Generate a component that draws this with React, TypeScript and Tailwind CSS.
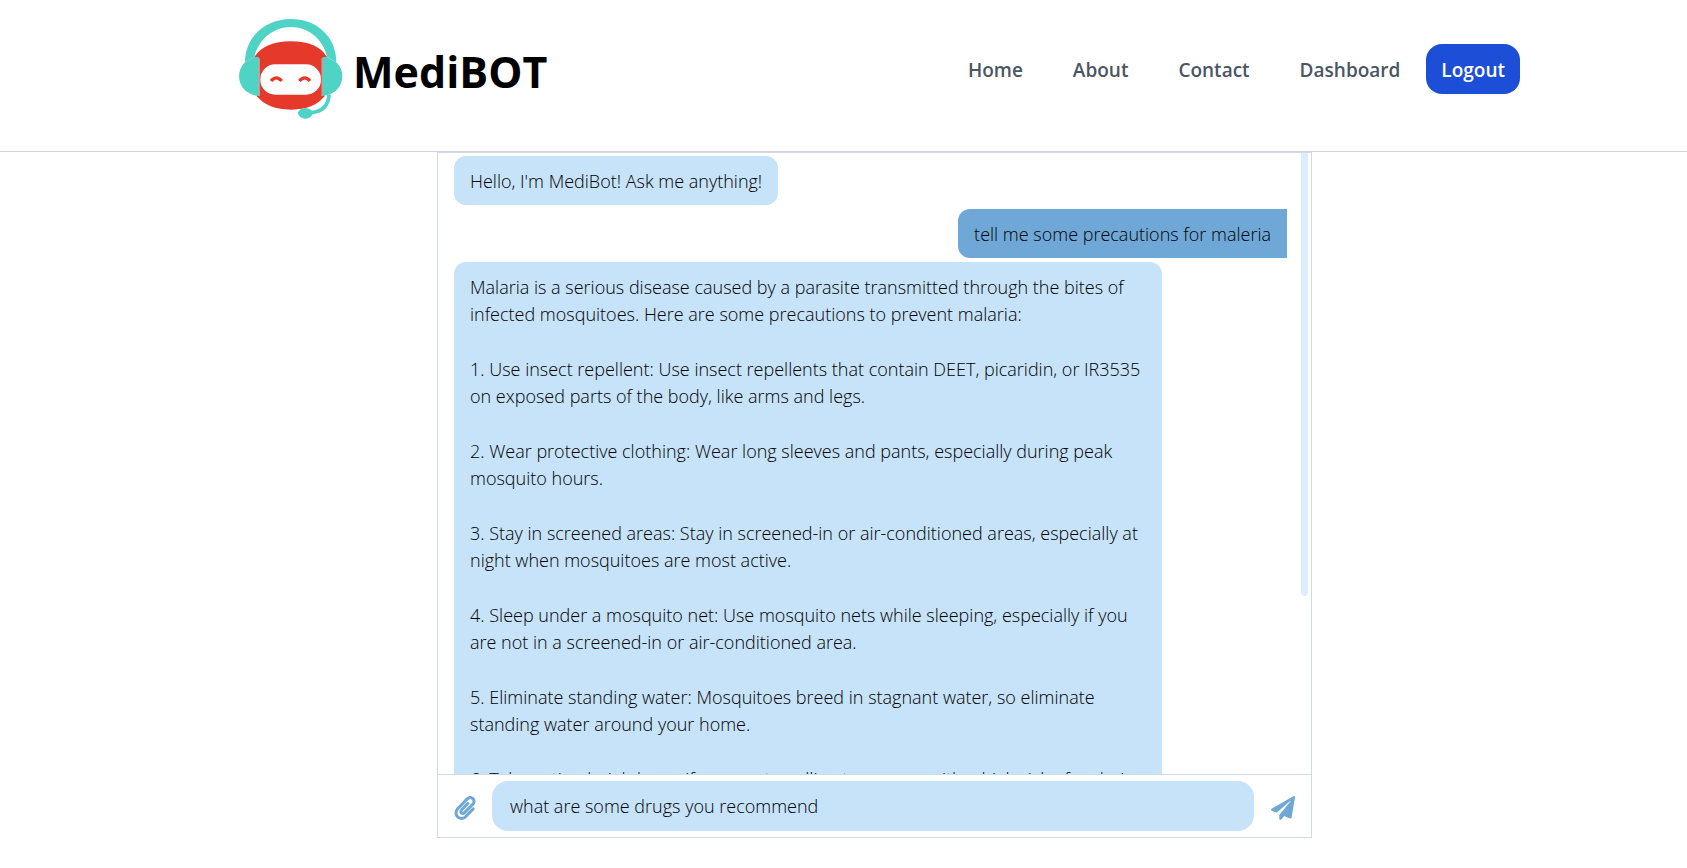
import { FaPaperclip, FaPaperPlane } from "react-icons/fa";

const links = ["Home", "About", "Contact", "Dashboard"];

const advice = [
  "Malaria is a serious disease caused by a parasite transmitted through the bites of infected mosquitoes. Here are some precautions to prevent malaria:",
  "1. Use insect repellent: Use insect repellents that contain DEET, picaridin, or IR3535 on exposed parts of the body, like arms and legs.",
  "2. Wear protective clothing: Wear long sleeves and pants, especially during peak mosquito hours.",
  "3. Stay in screened areas: Stay in screened-in or air-conditioned areas, especially at night when mosquitoes are most active.",
  "4. Sleep under a mosquito net: Use mosquito nets while sleeping, especially if you are not in a screened-in or air-conditioned area.",
  "5. Eliminate standing water: Mosquitoes breed in stagnant water, so eliminate standing water around your home.",
  "6. Take antimalarial drugs: if you are travelling to an area with a high risk of malaria, ask your doctor about preventive medicine.",
];

function Logo() {
  return (
    <svg width="104" height="100" viewBox="0 0 312 300" aria-hidden="true">
      <path d="M46 114 Q76 67 156 67 Q236 67 264 114 L256 232 Q226 272 156 272 Q86 272 54 232 Z" fill="#e5392b" />
      <path d="M18 130 C18 52 80 0 156 0 C232 0 292 52 292 130 L264 113 C252 62 210 24 156 24 C102 24 58 62 46 114 Z" fill="#4fd3c4" />
      <path d="M18 130 L46 114 L56 114 Q60 114 60 118 L60 231 Q34 229 18 214 C-6 192 -6 152 18 130 Z" fill="#4fd3c4" />
      <path d="M292 130 L264 114 L254 114 Q250 114 250 118 L250 231 Q276 229 292 214 C316 192 316 152 292 130 Z" fill="#4fd3c4" />
      <path d="M61 118 V231 M249 118 V231" stroke="#f6c4bf" strokeWidth="2" />
      <rect x="64" y="136" width="182" height="91" rx="45" fill="#fff" />
      <path d="M96 186 Q112 167 128 186 M181 186 Q197 167 213 186" fill="none" stroke="#e5392b" strokeWidth="10" />
      <path d="M270 226 Q268 276 216 281" fill="none" stroke="#4fd3c4" strokeWidth="11" />
      <ellipse cx="199" cy="283" rx="22" ry="16" fill="#4fd3c4" />
    </svg>
  );
}

export default function App() {
  return (
    <div className="min-h-screen bg-white font-['Open_Sans','Noto_Sans',sans-serif] text-gray-900">
      <header className="h-[152px] border-b border-[#d1d5db] pl-[72px]">
        <div className="mx-auto flex h-[138px] max-w-[1281px] items-center justify-between">
          <a href="#home" className="flex items-center gap-[10px] text-black">
            <Logo />
            <span className="pt-1 text-[43px] leading-none font-bold">MediBOT</span>
          </a>
          <nav className="flex items-center gap-[26px] text-[19px] font-semibold text-[#4b5563]">
            <ul className="flex items-center gap-[50px] pt-[2px]">
              {links.map((l) => (
                <li key={l}>
                  <a href={"#" + l.toLowerCase()}>{l}</a>
                </li>
              ))}
            </ul>
            <button type="button" className="h-[50px] rounded-2xl bg-[#1d4ed8] px-[15px] pt-[2px] text-white">
              Logout
            </button>
          </nav>
        </div>
      </header>

      <main className="pl-[62px]">
        <section className="mx-auto flex h-[calc(100vh-182px)] max-w-[875px] flex-col border border-[#d0dbe6]">
          <div className="relative min-h-0 flex-1 overflow-hidden">
            <div className="flex h-full flex-col items-start gap-1 overflow-y-auto pt-[3px] pr-6 pl-4 text-lg leading-[27px] font-light text-black [scrollbar-width:none]">
              <p className="shrink-0 rounded-xl bg-[#c7e3f9] px-4 pt-3 pb-[10px]">Hello, I'm MediBot! Ask me anything!</p>
              <p className="shrink-0 self-end rounded-l-xl bg-[#6fa8d7] px-4 pt-3 pb-[10px]">
                tell me some precautions for maleria
              </p>
              <div className="flex max-w-[708px] shrink-0 flex-col gap-7 rounded-xl bg-[#c7e3f9] px-4 pt-3 pb-[10px]">
                {advice.map((p) => (
                  <p key={p}>{p}</p>
                ))}
              </div>
            </div>
            <div className="absolute top-0 right-[3px] h-[443px] w-[7px] rounded-b-sm bg-[#dceefe]" />
          </div>
          <form className="flex h-[63px] items-center border-t border-[#d0dbe6] px-4" onSubmit={(e) => e.preventDefault()}>
            <button type="button" aria-label="Attach file" className="flex w-[21px] justify-center pt-1 text-2xl text-[#6fa8d7]">
              <FaPaperclip className="shrink-0" />
            </button>
            <input
              aria-label="Message"
              defaultValue="what are some drugs you recommend"
              className="mx-[17px] h-[50px] min-w-0 flex-1 rounded-2xl bg-[#c7e3f9] px-[18px] text-lg font-light text-black outline-none"
            />
            <button type="submit" aria-label="Send" className="pt-1 text-2xl text-[#6fa8d7]">
              <FaPaperPlane />
            </button>
          </form>
        </section>
      </main>
    </div>
  );
}
